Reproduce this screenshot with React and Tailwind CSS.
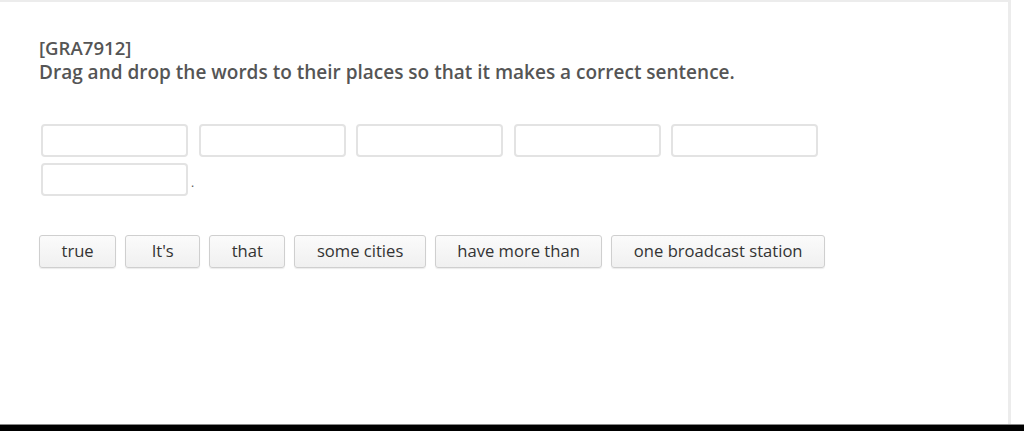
export default function App() {
  const slots = [1, 2, 3, 4, 5];
  const words = ["true", "It's", "that", "some cities", "have more than", "one broadcast station"];

  return (
    <div className="w-[1024px] h-[431px] flex flex-col bg-white" style={{ fontFamily: '"Open Sans", sans-serif' }}>
      <div className="h-[424px] w-[1011px] border-t-2 border-r-[3px] border-[#ececec] pl-[39px] pt-[34px]">
        <div className="text-[19px] leading-[24px] font-semibold text-[#555]">
          <div className="text-[18.6px]">[GRA7912]</div>
          <div>Drag and drop the words to their places so that it makes a correct sentence.</div>
        </div>

        <div className="mt-[40px] ml-[2px] flex flex-col gap-[6px]">
          <div className="flex gap-[10.5px]">
            {slots.map((s) => (
              <div key={s} className="w-[147px] h-[33px] rounded-[4px] border-2 border-[#e3e3e3] bg-white" />
            ))}
          </div>
          <div className="flex items-end gap-[3px]">
            <div className="w-[147px] h-[33px] rounded-[4px] border-2 border-[#e3e3e3] bg-white" />
            <span className="text-[12px] leading-none text-[#555] mb-[7px]">.</span>
          </div>
        </div>

        <div className="mt-[39px] flex gap-[9px]">
          {words.map((w) => (
            <div
              key={w}
              className="h-[33px] min-w-[75px] px-[21.5px] flex items-center justify-center rounded-[3px] border border-[#cfcfcf] bg-gradient-to-b from-[#fbfbfb] to-[#f0f0f0] text-[16.6px] text-[#333] shadow-[0_1px_1px_rgba(0,0,0,0.08)]"
            >
              {w}
            </div>
          ))}
        </div>
      </div>
      <div className="flex-1 bg-black border-t border-[#888]" />
    </div>
  );
}
